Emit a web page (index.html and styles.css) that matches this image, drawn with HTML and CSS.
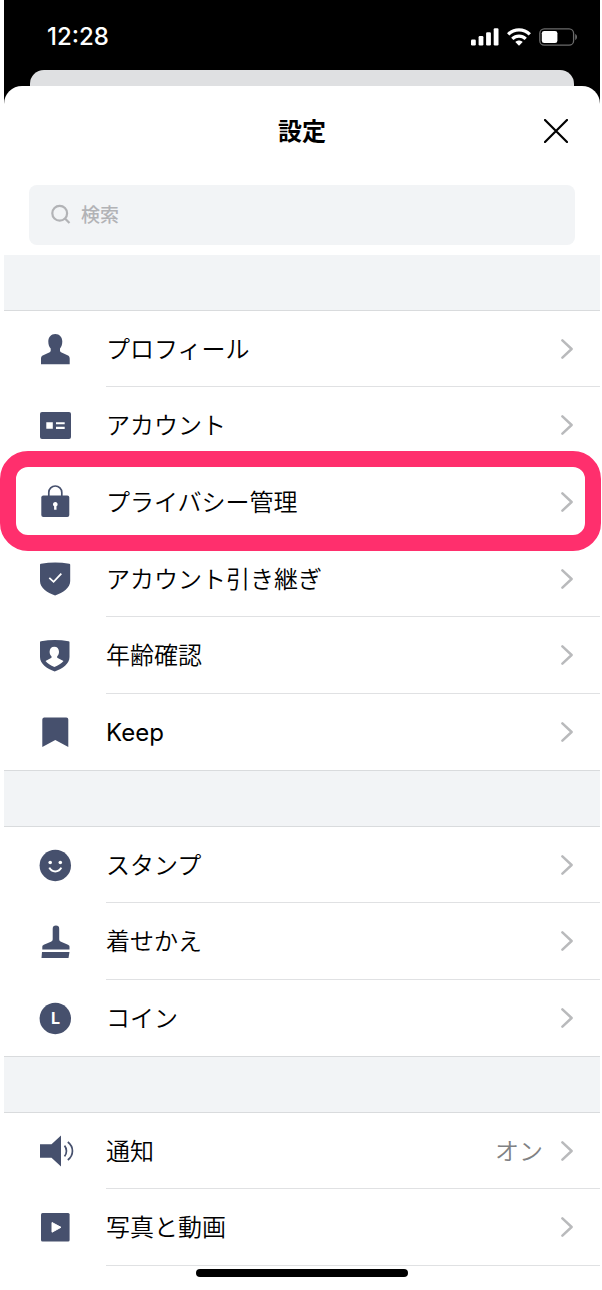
FILE: index.html
```html
<!DOCTYPE html>
<html lang="ja">
<head>
<meta charset="utf-8">
<meta name="viewport" content="width=device-width, initial-scale=1">
<title>設定</title>
<link rel="stylesheet" href="styles.css">
</head>
<body>
<svg class="symbols" aria-hidden="true">
  <symbol id="chevron" viewBox="0 0 12 20"><path d="M1.4 1.4 10.6 10 1.4 18.6" fill="none" stroke="#b9babc" stroke-width="2.5" stroke-linecap="round" stroke-linejoin="round"/></symbol>
</svg>
<div class="phone">
  <div class="status">
    <time class="clock">12:28</time>
    <div class="indicators">
      <svg width="28" height="18" viewBox="0 0 28 18" fill="#fff" aria-label="電波"><rect x="0" y="11.5" width="4.8" height="6" rx="1.2"/><rect x="7.6" y="8" width="4.8" height="9.5" rx="1.2"/><rect x="15.1" y="4.3" width="4.8" height="13.2" rx="1.2"/><rect x="22.7" y="0.3" width="4.8" height="17.2" rx="1.2"/></svg>
      <svg width="24" height="18" viewBox="0 0 24 18" aria-label="Wi-Fi"><g fill="none" stroke="#fff" stroke-width="3.3"><path d="M1.2 6.4C7.4.3 16.6.3 22.8 6.4"/><path d="M5.3 10.9c3.900-3.800 9.500-3.800 13.400 0"/></g><path d="M8.300 14c2.100-2 5.300-2 7.400 0L12 17.800z" fill="#fff"/></svg>
      <svg width="39" height="18" viewBox="0 0 39 18" aria-label="バッテリー"><rect x=".8" y=".8" width="33.8" height="16.4" rx="4.5" fill="none" stroke="#6b6b6b" stroke-width="1.3"/><rect x="2.8" y="2.9" width="15.6" height="12.2" rx="2.4" fill="#fff"/><path d="M36.200 6c2.400.8 2.400 5.200 0 6z" fill="#6b6b6b"/></svg>
    </div>
  </div>
  <div class="backdrop"></div>
  <main class="sheet">
    <header class="header">
      <h1 class="title">設定</h1>
      <button class="close" type="button" aria-label="閉じる"><svg width="24" height="24" viewBox="0 0 24 24"><path d="M1 1 23 23M23 1 1 23" stroke="#000" stroke-width="2.2" stroke-linecap="round"/></svg></button>
    </header>
    <label class="search">
      <svg width="20" height="20" viewBox="0 0 20 20" fill="none" stroke="#b2b3b6" stroke-width="2.2"><circle cx="8.7" cy="9.200" r="7.400"/><path d="m14 14.500 4.500 4.500"/></svg>
      <input class="search-input" type="search" placeholder="検索" aria-label="検索">
    </label>

    <ul class="group">
      <li class="row"><a class="link" href="#profile">
        <svg class="icon" viewBox="0 0 40 40"><path d="M20.300 5c4.300 0 7 3.200 7 7.600 0 3.400-1 5.500-2.300 7v2.200c0 .7.300 1.100 1 1.400l6.500 3c1.500.7 2.200 1.700 2.200 3.300v5.800H6v-5.800c0-1.600.700-2.600 2.200-3.300l6.500-3c.7-.3 1-.7 1-1.400v-2.200c-1.400-1.500-2.400-3.600-2.400-7 0-4.400 2.700-7.600 7-7.600z"/></svg>
        <span class="body"><span class="label">プロフィール</span><svg class="chevron"><use href="#chevron"/></svg></span></a></li>
      <li class="row"><a class="link" href="#account">
        <svg class="icon" viewBox="0 0 40 40"><rect x="5" y="7" width="31" height="27" rx="2"/><path fill="#fff" d="M11.300 17.200h6.500v6.500h-6.500zM21 17.200h8.700v2.100H21zM21 21.800h8.700v2.100H21z"/></svg>
        <span class="body"><span class="label">アカウント</span><svg class="chevron"><use href="#chevron"/></svg></span></a></li>
      <li class="row row-marked"><a class="link" href="#privacy">
        <svg class="icon" viewBox="0 0 40 40"><rect x="6.300" y="13.500" width="28" height="21.500" rx="2"/><path d="M13.800 14v-3.500a6.500 6.500 0 0 1 13 0V14" fill="none" stroke="#46506d" stroke-width="1.700"/><path fill="#fff" d="M20.300 20a2.300 2.300 0 0 1 1.200 4.300v3.400h-2.400v-3.400a2.300 2.300 0 0 1 1.200-4.300z"/></svg>
        <span class="body"><span class="label">プライバシー管理</span><svg class="chevron"><use href="#chevron"/></svg></span></a></li>
      <li class="row"><a class="link" href="#transfer">
        <svg class="icon" viewBox="0 0 40 40"><path d="M5 5.800c0-.6.300-1 1-1.100 9.500-1.600 19-1.600 28.200 0 .7.100 1 .5 1 1.100V22c0 7-7 11.500-15.100 14.500C12 33.500 5 29 5 22z"/><path d="m14.300 18.800 4.300 4 7.700-8.200" fill="none" stroke="#fff" stroke-width="1.800"/></svg>
        <span class="body"><span class="label">アカウント引き継ぎ</span><svg class="chevron"><use href="#chevron"/></svg></span></a></li>
      <li class="row"><a class="link" href="#age">
        <svg class="icon" viewBox="0 0 40 40"><path d="M5 7.300c0-.6.300-1 1-1.100 9.300-1.600 18.500-1.600 27.500 0 .7.100 1 .5 1 1.100V22c0 7-6.800 11.500-14.800 14.500C11.800 33.500 5 29 5 22z"/><path fill="#fff" d="M19.300 11.800c2.800 0 4.700 2 4.700 4.900 0 2-.8 3.500-1.800 4.500v1.600l6.300 3.200c-1.900 2.500-5.200 4.300-9.100 6-3.900-1.700-7-3.500-8.900-6l6-3.200v-1.600c-1.100-1-1.900-2.500-1.900-4.500 0-2.900 1.900-4.900 4.700-4.900z"/></svg>
        <span class="body"><span class="label">年齢確認</span><svg class="chevron"><use href="#chevron"/></svg></span></a></li>
      <li class="row"><a class="link" href="#keep">
        <svg class="icon" viewBox="0 0 40 40"><path d="M9 5.500h22.300a2 2 0 0 1 2 2V35l-13-7-13 7V7.500a2 2 0 0 1 1.700-2z"/></svg>
        <span class="body"><span class="label label-latin">Keep</span><svg class="chevron"><use href="#chevron"/></svg></span></a></li>
    </ul>

    <ul class="group">
      <li class="row"><a class="link" href="#stickers">
        <svg class="icon" viewBox="0 0 40 40"><circle cx="20.300" cy="20.500" r="15.700"/><circle cx="15.200" cy="17.500" r="1.800" fill="#fff"/><circle cx="25.300" cy="17.500" r="1.800" fill="#fff"/><path d="M14.300 22.700c2.300 4.900 9.700 4.900 12 0" fill="none" stroke="#fff" stroke-width="2"/></svg>
        <span class="body"><span class="label">スタンプ</span><svg class="chevron"><use href="#chevron"/></svg></span></a></li>
      <li class="row"><a class="link" href="#themes">
        <svg class="icon" viewBox="0 0 40 40"><path d="M17.700 7.800a3.200 3.200 0 0 1 6.500 0V18c0 1.600.5 2.200 1.800 2.800l7 3c1 .5 1.500 1.100 1.500 2v2.800H7.300v-2.800c0-.9.500-1.500 1.500-2l7.100-3c1.300-.6 1.800-1.200 1.800-2.800zM7 31h27.500l-1 6H6.500z"/></svg>
        <span class="body"><span class="label">着せかえ</span><svg class="chevron"><use href="#chevron"/></svg></span></a></li>
      <li class="row"><a class="link" href="#coins">
        <svg class="icon" viewBox="0 0 40 40"><circle cx="20.300" cy="20.500" r="15.700"/><text class="coin" x="16" y="26">L</text></svg>
        <span class="body"><span class="label">コイン</span><svg class="chevron"><use href="#chevron"/></svg></span></a></li>
    </ul>

    <ul class="group group-open">
      <li class="row"><a class="link" href="#notifications">
        <svg class="icon" viewBox="0 0 40 40"><path d="M5 13.200h11.500L26 4.500v31l-9.500-8.700H5z"/><path d="M29.500 14.600c2.600 3 2.600 7.800 0 10.800M32.800 11c6.200 4.800 6.200 13.200 0 18" fill="none" stroke="#46506d" stroke-width="1.700"/></svg>
        <span class="body"><span class="label">通知</span><span class="value">オン</span><svg class="chevron"><use href="#chevron"/></svg></span></a></li>
      <li class="row"><a class="link" href="#media">
        <svg class="icon" viewBox="0 0 40 40"><rect x="6" y="6" width="28.600" height="28.600" rx="1.500"/><path d="M17 15.500 26 20.300 17 25.200z" fill="#fff" stroke="#fff" stroke-linejoin="round"/></svg>
        <span class="body"><span class="label">写真と動画</span><svg class="chevron"><use href="#chevron"/></svg></span></a></li>
    </ul>
  </main>
</div>
<div class="home-bar"></div>
</body>
</html>
```
FILE: styles.css
```css
*,
*::before,
*::after {
  box-sizing: border-box;
}

body {
  margin: 0;
  height: 100vh;
  overflow: hidden;
  background: #fff;
  color: #000;
  font-family: Inter, "Noto Sans CJK JP", sans-serif;
}

svg {
  display: block;
  flex: none;
}

.symbols {
  position: absolute;
  width: 0;
  height: 0;
}

.phone {
  margin: 0 2px 0 4px;
  background: linear-gradient(#000 0 110px, #fff 110px);
}

.status {
  display: flex;
  align-items: center;
  justify-content: space-between;
  height: 70px;
  padding: 4px 22px 0 43px;
}

.clock {
  color: #fff;
  font-size: 24px;
  font-weight: 500;
  line-height: 32px;
}

.indicators {
  display: flex;
  gap: 8px;
}

.backdrop {
  height: 16px;
  margin: 0 26px;
  border-radius: 14px 14px 0 0;
  background: #dfe0e2;
}

.sheet {
  border-radius: 18px 18px 0 0;
  background: #fff;
}

.header {
  display: grid;
  grid-template-columns: 1fr auto 1fr;
  align-items: center;
  height: 90px;
  padding: 0 28px;
}

.title {
  grid-column: 2;
  margin: 0;
  padding-top: 2px;
  font-size: 24px;
  font-weight: 700;
  line-height: 32px;
}

.close {
  justify-self: end;
  margin-right: 4px;
  padding: 0;
  border: 0;
  background: none;
}

.search {
  display: flex;
  align-items: center;
  gap: 10px;
  height: 60px;
  margin: 9px 25px 10px;
  padding: 0 22px 2px;
  border-radius: 8px;
  background: #f2f4f6;
}

.search-input {
  flex: 1;
  min-width: 0;
  padding: 0;
  border: 0;
  outline: 0;
  background: none;
  font: 500 19px/28px "Noto Sans CJK JP", sans-serif;
}

.search-input::placeholder {
  color: #b2b3b6;
}

.group {
  margin: 0;
  padding: 0;
  list-style: none;
}

.group::before {
  content: "";
  display: block;
  height: 56px;
  border-bottom: 1px solid #d9dbdd;
  background: #f2f4f6;
}

.group + .group::before {
  box-shadow: 0 -1px #d9dbdd;
}

.row {
  height: 77px;
}

.row:nth-child(3n + 1) {
  height: 76px;
}

.row-marked {
  position: relative;
}

.row-marked::after {
  content: "";
  position: absolute;
  inset: -13px -1px -10px -4px;
  border: 16px solid #ff2f6d;
  border-radius: 28px;
  pointer-events: none;
}

.link {
  display: grid;
  grid-template-columns: 102px 1fr;
  align-items: center;
  height: 100%;
  color: inherit;
  text-decoration: none;
}

.icon {
  justify-self: center;
  width: 40px;
  height: 40px;
  margin-bottom: 1px;
  fill: #46506d;
}

.coin {
  fill: #fff;
  font: 700 16px Inter, sans-serif;
}

.body {
  display: flex;
  align-items: center;
  height: 100%;
  padding-right: 27px;
  border-bottom: 1px solid #e0e1e3;
}

.row:nth-child(2) .body,
.row:last-child .body,
.row-marked .body {
  border-bottom-color: transparent;
}

.group + .group .row:nth-child(2) .body {
  border-bottom-color: #e0e1e3;
}

.label {
  flex: 1;
  padding-top: 2px;
  font-size: 24px;
  font-weight: 350;
  line-height: 36px;
}

.label-latin {
  font-weight: 400;
}

.value {
  margin-right: 18px;
  padding-top: 2px;
  color: #808183;
  font-size: 24px;
  font-weight: 350;
  line-height: 36px;
}

.chevron {
  width: 12px;
  height: 20px;
}

.home-bar {
  position: fixed;
  bottom: 13px;
  left: 50%;
  width: 212px;
  height: 8px;
  margin-left: 1px;
  border-radius: 4px;
  background: #000;
  transform: translateX(-50%);
}
```
